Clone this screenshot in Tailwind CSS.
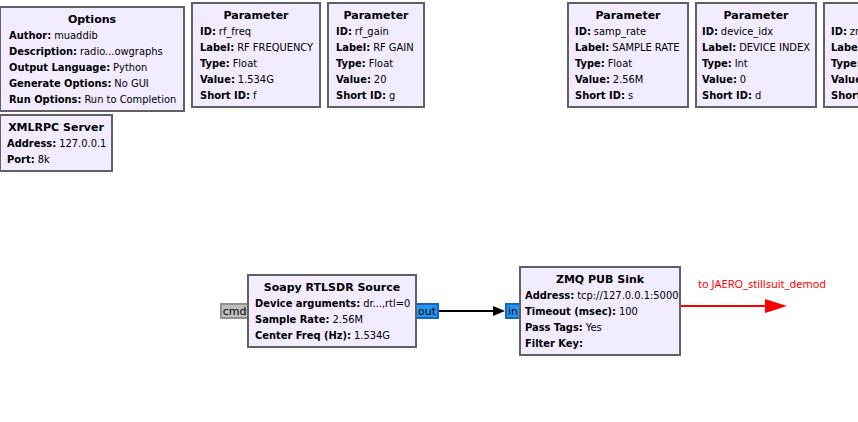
<!DOCTYPE html>
<html lang="en">
<head>
<meta charset="utf-8">
<title>Flow graph</title>
<script src="https://cdn.jsdelivr.net/npm/@tailwindcss/browser@4"></script>
</head>
<body class="bg-white">
<main class="relative min-h-screen w-full overflow-hidden whitespace-nowrap font-['DejaVu_Sans_Condensed','DejaVu_Sans',sans-serif] text-[11px] leading-4 text-black [&_section]:absolute [&_section]:border-2 [&_section]:border-[#616161] [&_section]:bg-[#f1ecff] [&_section]:pt-1 [&_section]:pb-[2px] [&_h2]:text-center [&_h2]:font-['DejaVu_Sans',sans-serif] [&_h2]:font-bold [&_dl>div]:flex [&_dl>div]:gap-[3px] [&_dt]:font-bold">

  <section class="-left-px top-[6px] w-[186px] px-2"><h2>Options</h2>
    <dl><div><dt>Author:</dt><dd>muaddib</dd></div><div><dt>Description:</dt><dd>radio...owgraphs</dd></div><div><dt>Output Language:</dt><dd>Python</dd></div><div><dt>Generate Options:</dt><dd>No GUI</dd></div><div><dt>Run Options:</dt><dd>Run to Completion</dd></div></dl></section>

  <section class="-left-px top-[114px] w-[114px] px-[6px]"><h2>XMLRPC Server</h2>
    <dl><div><dt>Address:</dt><dd>127.0.0.1</dd></div><div><dt>Port:</dt><dd>8k</dd></div></dl></section>

  <section class="left-[191px] top-[2px] w-[130px] px-[7px]"><h2>Parameter</h2>
    <dl><div><dt>ID:</dt><dd>rf_freq</dd></div><div><dt>Label:</dt><dd>RF FREQUENCY</dd></div><div><dt>Type:</dt><dd>Float</dd></div><div><dt>Value:</dt><dd>1.534G</dd></div><div><dt>Short ID:</dt><dd>f</dd></div></dl></section>

  <section class="left-[327px] top-[2px] w-[98px] px-[7px]"><h2>Parameter</h2>
    <dl><div><dt>ID:</dt><dd>rf_gain</dd></div><div><dt>Label:</dt><dd>RF GAIN</dd></div><div><dt>Type:</dt><dd>Float</dd></div><div><dt>Value:</dt><dd>20</dd></div><div><dt>Short ID:</dt><dd>g</dd></div></dl></section>

  <section class="left-[567px] top-[2px] w-[122px] px-[6px]"><h2>Parameter</h2>
    <dl><div><dt>ID:</dt><dd>samp_rate</dd></div><div><dt>Label:</dt><dd>SAMPLE RATE</dd></div><div><dt>Type:</dt><dd>Float</dd></div><div><dt>Value:</dt><dd>2.56M</dd></div><div><dt>Short ID:</dt><dd>s</dd></div></dl></section>

  <section class="left-[695px] top-[2px] w-[122px] px-[5px]"><h2>Parameter</h2>
    <dl><div><dt>ID:</dt><dd>device_idx</dd></div><div><dt>Label:</dt><dd>DEVICE INDEX</dd></div><div><dt>Type:</dt><dd>Int</dd></div><div><dt>Value:</dt><dd>0</dd></div><div><dt>Short ID:</dt><dd>d</dd></div></dl></section>

  <section class="left-[823px] top-[2px] w-[146px] px-[6px]"><h2>Parameter</h2>
    <dl><div><dt>ID:</dt><dd>zmq</dd></div><div><dt>Label:</dt><dd></dd></div><div><dt>Type:</dt><dd></dd></div><div><dt>Value:</dt><dd></dd></div><div><dt>Short ID:</dt><dd></dd></div></dl></section>

  <div class="absolute left-[220px] top-[303px] flex h-4 w-[27px] items-center justify-center border-2 border-r-0 border-[#919191] bg-[#bdbdbd] pt-[2px] font-['DejaVu_Sans',sans-serif]">cmd</div>
  <section class="left-[247px] top-[274px] w-[170px] px-[6px]"><h2>Soapy RTLSDR Source</h2>
    <dl><div><dt>Device arguments:</dt><dd>dr...,rtl=0</dd></div><div><dt>Sample Rate:</dt><dd>2.56M</dd></div><div><dt>Center Freq (Hz):</dt><dd>1.534G</dd></div></dl></section>
  <div class="absolute left-[417px] top-[303px] flex h-4 w-[22px] items-center justify-center border-2 border-l-0 border-[#1565c0] bg-[#2196f3] pt-[2px] font-['DejaVu_Sans',sans-serif]">out</div>

  <svg class="absolute left-[439px] top-[305px] h-3 w-[67px]" viewBox="0 0 67 12" aria-hidden="true"><path d="M0 6H56" stroke="#000" stroke-width="2"/><path d="M54 1L66 6L54 11Z"/></svg>

  <div class="absolute left-[505px] top-[303px] flex h-4 w-[14px] items-center justify-center border-2 border-r-0 border-[#1565c0] bg-[#2196f3] pt-[2px] font-['DejaVu_Sans',sans-serif]">in</div>
  <section class="left-[519px] top-[266px] w-[162px] px-1"><h2>ZMQ PUB Sink</h2>
    <dl><div><dt>Address:</dt><dd>tcp://127.0.0.1:5000</dd></div><div><dt>Timeout (msec):</dt><dd>100</dd></div><div><dt>Pass Tags:</dt><dd>Yes</dd></div><div><dt>Filter Key:</dt><dd></dd></div></dl></section>

  <p class="absolute left-[698px] top-[276px] font-['Noto_Sans',sans-serif] text-[11px] text-[#ff0000]">to JAERO_stillsuit_demod</p>
  <svg class="absolute left-[681px] top-[298px] h-4 w-[107px]" viewBox="0 0 107 16" aria-hidden="true"><path d="M0 8H86" stroke="#f00" stroke-width="2"/><path d="M84 1L106 8L84 15Z" fill="#f00"/></svg>
</main>
</body>
</html>
